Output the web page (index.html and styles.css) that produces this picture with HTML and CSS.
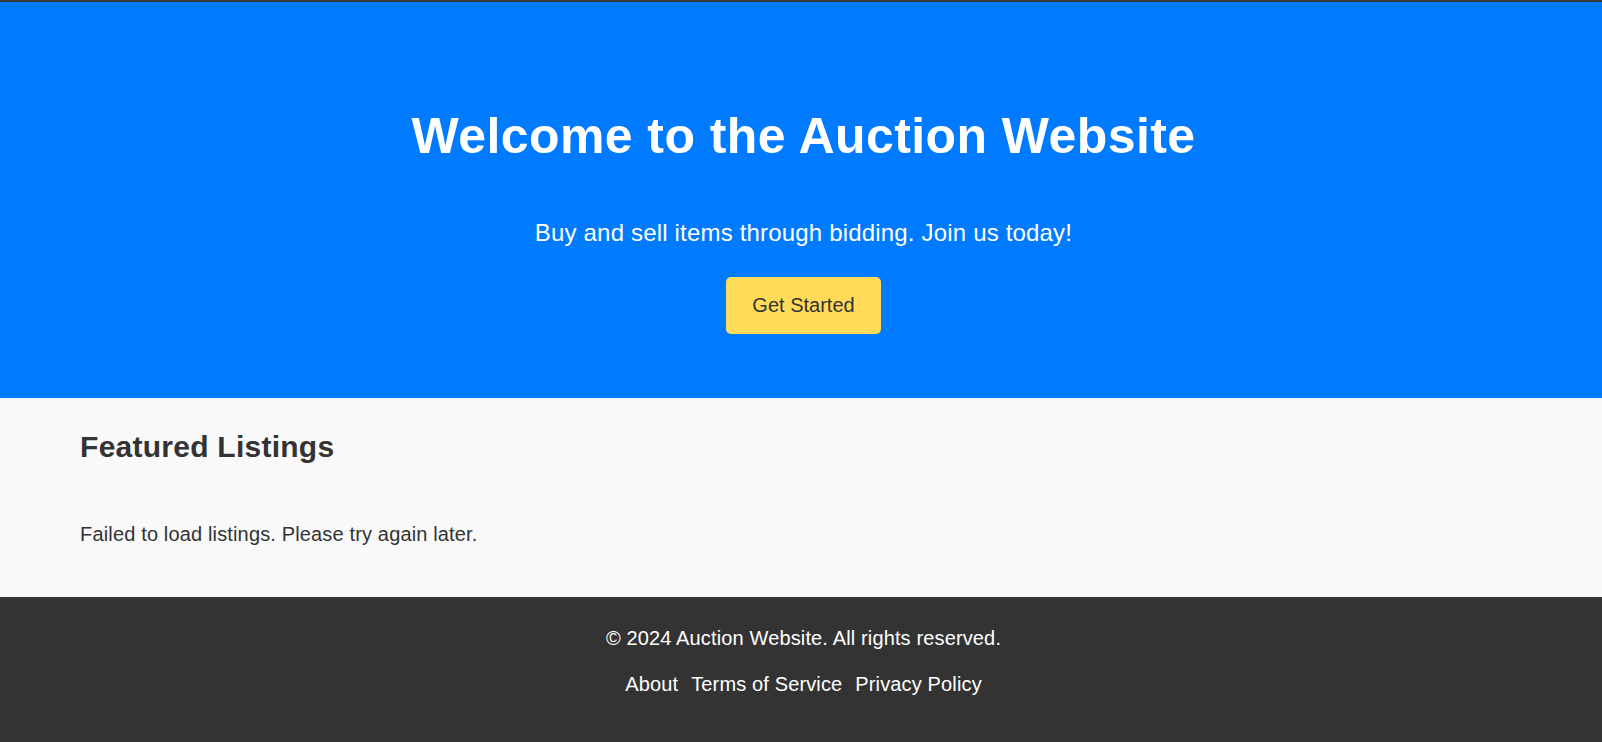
FILE: index.html
```html
<!DOCTYPE html>
<html lang="en">
<head>
<meta charset="utf-8">
<title>Auction Website</title>
<link rel="stylesheet" href="styles.css">
</head>
<body>
<header class="topbar"></header>
<section class="hero">
  <h1 class="hero-title">Welcome to the Auction Website</h1>
  <p class="hero-sub">Buy and sell items through bidding. Join us today!</p>
  <button class="cta" type="button">Get Started</button>
</section>
<main class="featured">
  <h2 class="featured-title">Featured Listings</h2>
  <p class="featured-msg">Failed to load listings. Please try again later.</p>
</main>
<footer class="footer">
  <p class="copy">© 2024 Auction Website. All rights reserved.</p>
  <nav class="links">
    <a href="#">About</a>
    <a href="#">Terms of Service</a>
    <a href="#">Privacy Policy</a>
  </nav>
</footer>
</body>
</html>
```
FILE: styles.css
```css
* { box-sizing: border-box; }
html, body {
  margin: 0;
  padding: 0;
}
body {
  font-family: "Liberation Sans", Arial, sans-serif;
  color: #333;
  background: #333;
}
.topbar {
  height: 2px;
  background: #3a3a3a;
}
.hero {
  background: #007bff;
  color: #fff;
  display: flex;
  flex-direction: column;
  align-items: center;
  padding: 107px 20px 64px 25px;
  text-align: center;
}
.hero-title {
  margin: 0;
  font-size: 50px;
  line-height: 55px;
  font-weight: bold;
  letter-spacing: 0.42px;
}
.hero-sub {
  margin: 55px 0 0;
  font-size: 24px;
  line-height: 28px;
  letter-spacing: 0.18px;
}
.cta {
  margin-top: 30px;
  width: 155px;
  height: 57px;
  background: #ffdb58;
  color: #333;
  border: none;
  border-radius: 5px;
  font-family: "Liberation Sans", Arial, sans-serif;
  font-size: 20px;
  line-height: 23px;
  padding: 0;
  cursor: pointer;
}
.featured {
  background: #f9f9f9;
  padding: 33px 5% 51px;
}
.featured-title {
  margin: 0;
  font-size: 30px;
  line-height: 32px;
  font-weight: bold;
  letter-spacing: 0.25px;
}
.featured-msg {
  margin: 60px 0 0;
  font-size: 20px;
  line-height: 23px;
  letter-spacing: 0.15px;
}
.footer {
  background: #333;
  color: #fff;
  text-align: center;
  padding: 30px 20px 45px 25px;
  font-size: 20px;
  line-height: 23px;
  letter-spacing: 0.14px;
}
.copy {
  margin: 0;
}
.links {
  margin-top: 23px;
  display: flex;
  justify-content: center;
  gap: 13px;
}
.links a {
  color: #fff;
  text-decoration: none;
}
```
